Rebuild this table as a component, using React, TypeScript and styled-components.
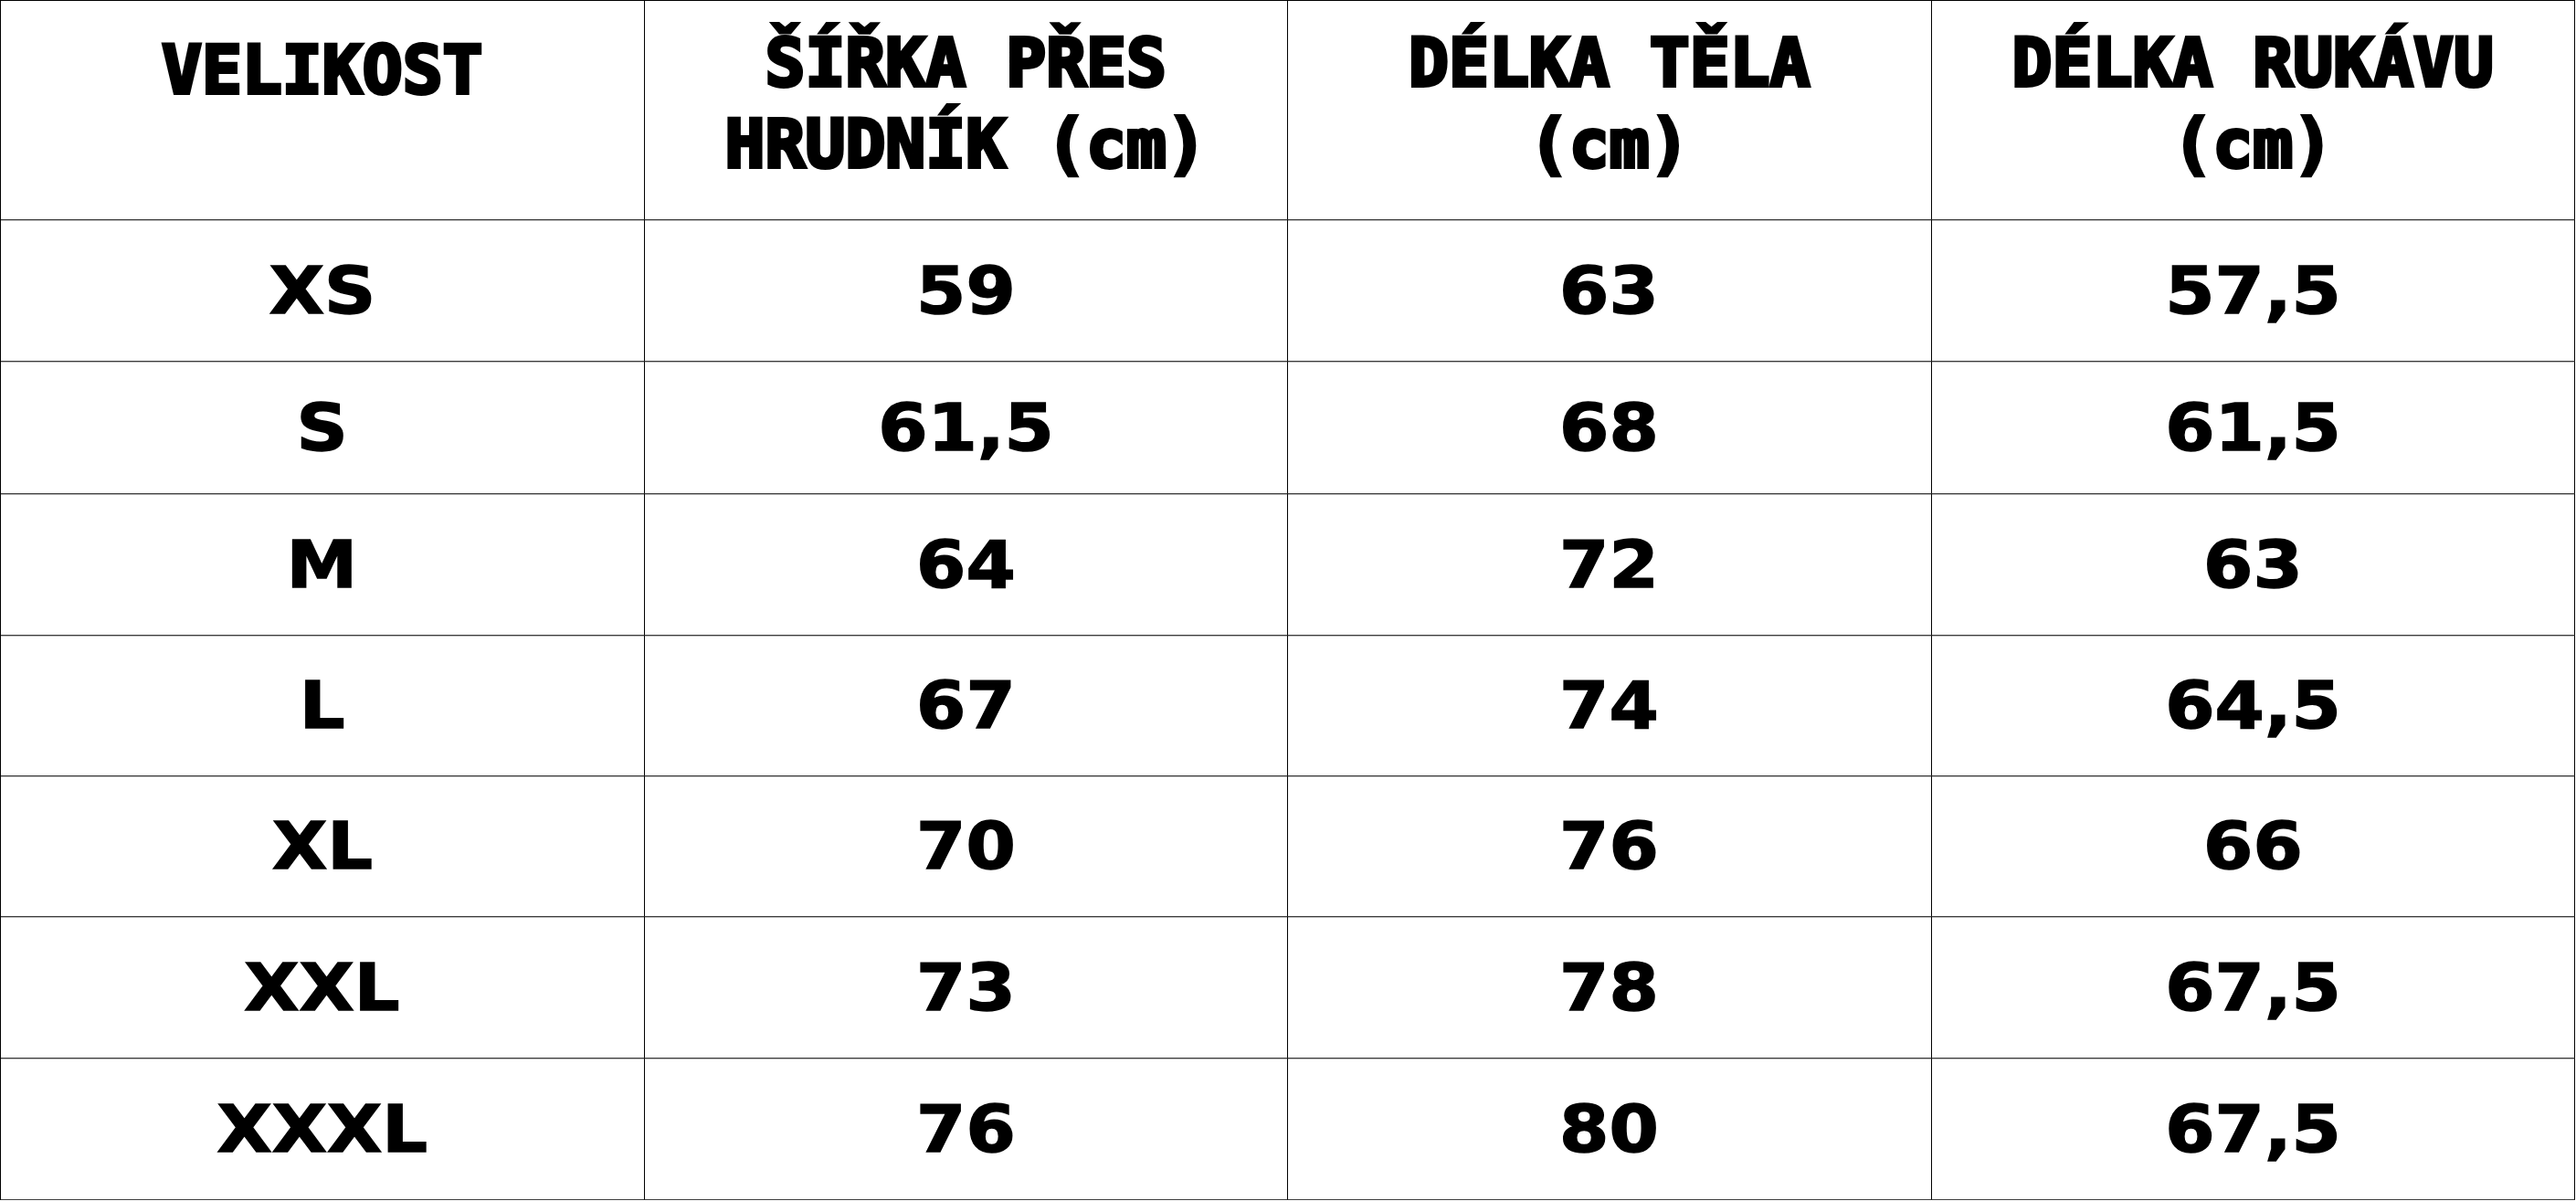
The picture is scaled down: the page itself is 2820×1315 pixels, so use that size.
import styled, { createGlobalStyle } from "styled-components";

const GlobalStyle = createGlobalStyle`
  html, body {
    margin: 0;
    padding: 0;
    background: #fff;
  }
  body {
    font-family: "DejaVu Sans", "Liberation Sans", sans-serif;
    color: #000;
  }
`;

const headers = [
  ["VELIKOST"],
  ["ŠÍŘKA PŘES", "HRUDNÍK (cm)"],
  ["DÉLKA TĚLA", "(cm)"],
  ["DÉLKA RUKÁVU", "(cm)"],
];

const rows = [
  ["XS", "59", "63", "57,5"],
  ["S", "61,5", "68", "61,5"],
  ["M", "64", "72", "63"],
  ["L", "67", "74", "64,5"],
  ["XL", "70", "76", "66"],
  ["XXL", "73", "78", "67,5"],
  ["XXXL", "76", "80", "67,5"],
];

const SizeTable = () => {
  return (
    <Table>
      {headers.map((lines, i) => (
        <HeadCell key={i} $single={lines.length === 1}>
          {lines.map((line) => (
            <HeadLine key={line}>{line}</HeadLine>
          ))}
        </HeadCell>
      ))}
      {rows.map((row, r) =>
        row.map((value, c) => (
          <Cell key={`${r}-${c}`}>
            <Value>{value}</Value>
          </Cell>
        ))
      )}
    </Table>
  );
};

const App = () => {
  return (
    <>
      <GlobalStyle />
      <SizeTable />
    </>
  );
};

const Table = styled.div`
  display: grid;
  grid-template-columns: repeat(4, 1fr);
  grid-template-rows: 240px 155px 145px 155px 154px 154px 155px 155px;
  width: 2818px;
  border-top: 1px solid #000;
  border-left: 1px solid #000;
`;

const BaseCell = styled.div`
  box-sizing: border-box;
  border-right: 1px solid #000;
  border-bottom: 1px solid #3c3c3c;
  box-shadow: 0 1px 0 #b8b8b8;
  display: flex;
  flex-direction: column;
  align-items: center;
`;

const HeadCell = styled(BaseCell)<{ $single?: boolean }>`
  justify-content: flex-start;
  padding-top: ${(p) => (p.$single ? "31px" : "23px")};
`;

const HeadLine = styled.span`
  font-family: "DejaVu Sans Mono", "Liberation Mono", monospace;
  font-weight: 700;
  font-size: 73px;
  line-height: 89px;
  white-space: nowrap;
  -webkit-text-stroke: 4px #000;
  paint-order: stroke fill;
`;

const Cell = styled(BaseCell)`
  justify-content: center;
`;

const Value = styled.span`
  display: inline-block;
  font-family: "DejaVu Sans", "Liberation Sans", sans-serif;
  font-weight: 700;
  font-size: 71px;
  line-height: 1;
  transform: scaleX(1.1);
  white-space: nowrap;
  -webkit-text-stroke: 1.5px #000;
`;

export default App;
